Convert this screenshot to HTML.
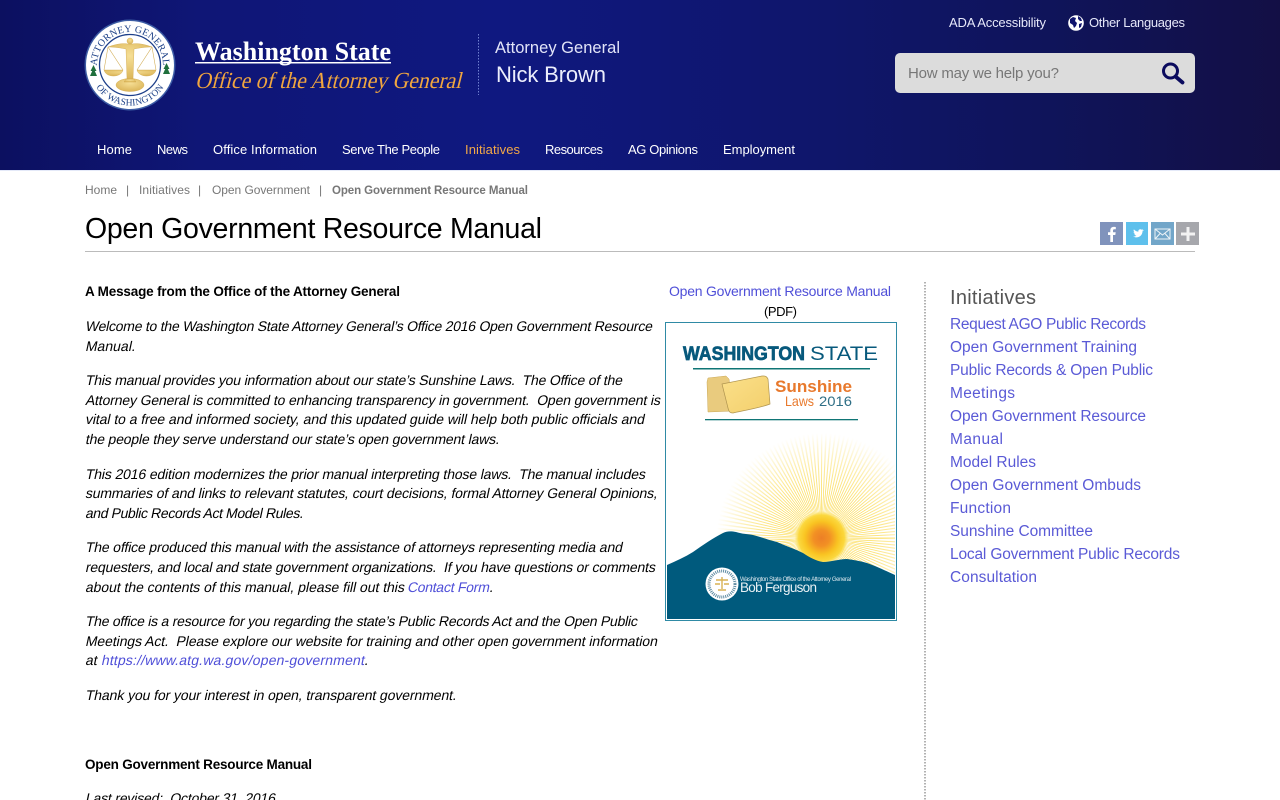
<!DOCTYPE html>
<html lang="en">
<head>
<meta charset="utf-8">
<title>Open Government Resource Manual</title>
<style>
html,body{margin:0;padding:0;width:1280px;height:800px;overflow:hidden;background:#fff}
#hdr{position:absolute;left:0;top:0;width:1280px;height:170px;background:linear-gradient(90deg,#0c1060 0,#0f1676 200px,#0f1880 500px,#0f166c 800px,#0f145a 1050px,#130f45 1280px);border-bottom:1px solid #e4e9f8}
svg#p{position:absolute;left:0;top:0;display:block}
text{font-family:"Liberation Sans",sans-serif;white-space:pre}
.n{font-size:13px;fill:#fff}
.b{font-size:14px;fill:#000}
.h{font-size:13.5px;fill:#000;font-weight:bold}
.c{font-size:12px;fill:#777}
.s{font-size:15.5px;fill:#5a5ad6}
.k{fill:#4f4fd8}
</style>
</head>
<body>
<header id="hdr"></header>
<svg id="p" width="1280" height="800" viewBox="0 0 1280 800" xmlns="http://www.w3.org/2000/svg">
<defs>
<radialGradient id="sun" cx="50%" cy="50%" r="50%">
<stop offset="0" stop-color="#ec7f26"/><stop offset=".3" stop-color="#f29024"/><stop offset=".62" stop-color="#f9c422"/><stop offset=".85" stop-color="#fbd530" stop-opacity=".9"/><stop offset="1" stop-color="#fbdc44" stop-opacity="0"/>
</radialGradient>
<radialGradient id="fade" gradientUnits="userSpaceOnUse" cx="821.500" cy="538" r="105">
<stop offset="0" stop-color="#fff" stop-opacity="0"/><stop offset=".3" stop-color="#fff" stop-opacity=".02"/><stop offset=".6" stop-color="#fff" stop-opacity=".45"/><stop offset="1" stop-color="#fff" stop-opacity="1"/>
</radialGradient>
<radialGradient id="gold" cx="50%" cy="35%" r="70%"><stop offset="0" stop-color="#f6df96"/><stop offset="1" stop-color="#d9b254"/></radialGradient>
<linearGradient id="fold" x1="0" y1="0" x2="1" y2="1"><stop offset="0" stop-color="#fbe08a"/><stop offset="1" stop-color="#f3cf6c"/></linearGradient>
<clipPath id="cov"><rect x="667" y="324" width="228" height="295"/></clipPath>
<path id="arcT" d="M97 65a33 33 0 0 1 66 0"/>
<path id="arcB" d="M89.500 65a40.500 40.500 0 0 0 81 0"/>
</defs>

<!-- seal -->
<circle cx="130" cy="65" r="45.500" fill="#5b8cc8" opacity=".6"/>
<circle cx="130" cy="65" r="44" fill="#fff"/>
<circle cx="130" cy="65" r="30.500" fill="#fff" stroke="#1d3f8a" stroke-width="1.300"/>
<text font-size="10" style="font-family:'Liberation Serif',serif" fill="#1b3f86" letter-spacing=".2"><textPath href="#arcT" startOffset="50%" text-anchor="middle">ATTORNEY GENERAL</textPath></text>
<text font-size="9.500" style="font-family:'Liberation Serif',serif" fill="#1b3f86" letter-spacing=".2"><textPath href="#arcB" startOffset="50%" text-anchor="middle">OF WASHINGTON</textPath></text>
<path d="M90.500 71l3-6 3 6zM90 76l3.500-8 3.500 8zM163.500 69l3-6 3 6zM163 74l3.500-8 3.500 8z" fill="#1f6f3c"/>
<g fill="url(#gold)" stroke="#cfa64a" stroke-width=".4">
<path d="M108 47c8-3 15-4 20-3h4c5-1 12 0 20 3-7 0-13 1-18 2l-1 30h-6l-1-30c-5-1-11-2-18-2z"/>
<circle cx="130" cy="41" r="3"/>
<path d="M104 70h19c-1 4-5 6-9.500 6s-8.500-2-9.500-6zM137 70h19c-1 4-5 6-9.500 6s-8.500-2-9.500-6z"/>
<ellipse cx="130" cy="85" rx="14" ry="6.500"/>
<path d="M126 79h8l2 3h-12z"/>
</g>
<path d="M108 47l-4 23M108 47l15 23M152 47l-15 23M152 47l4 23" stroke="#d2ad55" stroke-width=".6" fill="none"/>

<!-- brand -->
<text x="195" y="60" textLength="196" font-size="26" font-weight="bold" fill="#fff" style="font-family:'Liberation Serif',serif">Washington State</text>
<rect x="195" y="62" width="196" height="1.500" fill="#fff"/>
<text transform="translate(195 88) skewX(-14)" textLength="266" lengthAdjust="spacingAndGlyphs" font-size="23" fill="#f1a63f" style="font-family:'Liberation Serif',serif">Office of the Attorney General</text>
<line x1="478.500" y1="34" x2="478.500" y2="95" stroke="#6f7fd0" stroke-width="1" stroke-dasharray="1.500 1.500"/>
<text x="495" y="53" textLength="125" font-size="16.500" fill="#e2e4f8">Attorney General</text>
<text x="496" y="82" textLength="110" font-size="22" fill="#eceefc">Nick Brown</text>

<!-- top right -->
<text x="949" y="27" textLength="97" font-size="13" fill="#e6e8fa">ADA Accessibility</text>
<circle cx="1076" cy="23" r="7.800" fill="#fff"/>
<path d="M1070 19l3-2 3 1-1 3 2 2-1 3-2 2-1-3-3-2zM1078 16l3 2 1 3-2 0-2-2zM1079 24l3-1-1 4-2 1z" fill="#10156e"/>
<text x="1089" y="27" textLength="96" font-size="13" fill="#e6e8fa">Other Languages</text>
<rect x="895" y="53" width="300" height="40" rx="5" fill="#dcdcdc"/>
<text x="908" y="78" textLength="151" font-size="15" fill="#777">How may we help you?</text>
<circle cx="1170.500" cy="71" r="7" fill="none" stroke="#0b0b5e" stroke-width="3"/>
<line x1="1175.500" y1="76.500" x2="1182.500" y2="82.500" stroke="#0b0b5e" stroke-width="3.800" stroke-linecap="round"/>

<!-- nav -->
<text class="n" x="97" y="154" textLength="35">Home</text>
<text class="n" x="157" y="154" textLength="31">News</text>
<text class="n" x="213" y="154" textLength="104">Office Information</text>
<text class="n" x="342" y="154" textLength="98">Serve The People</text>
<text class="n" x="465" y="154" textLength="55" style="fill:#f3a847">Initiatives</text>
<text class="n" x="545" y="154" textLength="58">Resources</text>
<text class="n" x="628" y="154" textLength="70">AG Opinions</text>
<text class="n" x="723" y="154" textLength="72">Employment</text>

<!-- breadcrumb -->
<text class="c" x="85" y="194" textLength="32">Home</text>
<text class="c" x="126" y="194">|</text>
<text class="c" x="139" y="194" textLength="51">Initiatives</text>
<text class="c" x="198" y="194">|</text>
<text class="c" x="212" y="194" textLength="98">Open Government</text>
<text class="c" x="319" y="194">|</text>
<text class="c" x="332" y="194" textLength="196" font-weight="bold" style="font-size:11.500px">Open Government Resource Manual</text>

<!-- title -->
<text x="85" y="238" textLength="457" font-size="28.500" fill="#000">Open Government Resource Manual</text>
<rect x="85" y="251" width="1110" height="1" fill="#bbb"/>

<!-- share -->
<rect x="1100" y="222" width="23" height="23" fill="#8093bc"/>
<path d="M1113 242v-7h2.300l.4-2.800H1113v-1.700c0-.8.300-1.300 1.400-1.300h1.400V227c-.3 0-1.100-.1-2-.1-2.100 0-3.500 1.300-3.500 3.500v1.800H1108v2.800h2.300v7z" fill="#fff"/>
<rect x="1126" y="222" width="22" height="23" fill="#5ec0ec"/>
<path d="M1144 229.500c-.6.300-1.200.4-1.800.5.600-.4 1.100-1 1.400-1.700-.6.400-1.300.6-2 .8-1.500-1.500-4.400-.6-4.700 1.400-.1.400 0 .8.100 1.200-2.500-.1-4.800-1.300-6.300-3.200-.8 1.400-.4 3.100.9 4-.5 0-.9-.1-1.300-.4 0 1.500 1 2.700 2.400 3-.4.100-.9.100-1.300.1.400 1.200 1.500 2 2.800 2-1.300 1-2.900 1.500-4.500 1.300 5 3 12.500.6 13-7.300.6-.4 1.300-1 1.800-1.700z" fill="#fff" transform="translate(1137 234) scale(.72) translate(-1135 -235)"/>
<rect x="1151" y="222" width="23" height="23" fill="#72a6c9"/>
<path d="M1155 229h15v10h-15zM1155 229l7.500 6 7.500-6M1155 239l5.500-6M1170 239l-5.500-6" fill="none" stroke="#eef4f8" stroke-width="1"/>
<rect x="1176" y="222" width="23" height="23" fill="#a6a7ac"/>
<path d="M1188 227v14M1181 234h14" stroke="#f2f2f2" stroke-width="3"/>

<!-- main copy -->
<text class="h" x="85" y="296" textLength="315">A Message from the Office of the Attorney General</text>
<text class="b" transform="translate(85 331) skewX(-12)" textLength="567">Welcome to the Washington State Attorney General’s Office 2016 Open Government Resource</text>
<text class="b" transform="translate(85 351) skewX(-12)" textLength="50">Manual.</text>
<text class="b" transform="translate(85 385) skewX(-12)" textLength="537">This manual provides you information about our state’s Sunshine Laws.  The Office of the</text>
<text class="b" transform="translate(85 405) skewX(-12)" textLength="575">Attorney General is committed to enhancing transparency in government.  Open government is</text>
<text class="b" transform="translate(85 424) skewX(-12)" textLength="559">vital to a free and informed society, and this updated guide will help both public officials and</text>
<text class="b" transform="translate(85 444) skewX(-12)" textLength="414">the people they serve understand our state’s open government laws.</text>
<text class="b" transform="translate(85 479) skewX(-12)" textLength="560">This 2016 edition modernizes the prior manual interpreting those laws.  The manual includes</text>
<text class="b" transform="translate(85 498) skewX(-12)" textLength="572">summaries of and links to relevant statutes, court decisions, formal Attorney General Opinions,</text>
<text class="b" transform="translate(85 518) skewX(-12)" textLength="218">and Public Records Act Model Rules.</text>
<text class="b" transform="translate(85 552) skewX(-12)" textLength="537">The office produced this manual with the assistance of attorneys representing media and</text>
<text class="b" transform="translate(85 572) skewX(-12)" textLength="570">requesters, and local and state government organizations.  If you have questions or comments</text>
<text class="b" transform="translate(85 592) skewX(-12)" textLength="319">about the contents of this manual, please fill out this</text>
<a href="#"><text class="b k" transform="translate(407 592) skewX(-12)" textLength="82" style="fill:#4f4fd8">Contact Form</text></a>
<text class="b" transform="translate(489 592) skewX(-12)">.</text>
<text class="b" transform="translate(85 626) skewX(-12)" textLength="552">The office is a resource for you regarding the state’s Public Records Act and the Open Public</text>
<text class="b" transform="translate(85 646) skewX(-12)" textLength="572">Meetings Act.  Please explore our website for training and other open government information</text>
<text class="b" transform="translate(85 665) skewX(-12)">at</text>
<a href="#"><text class="b k" transform="translate(101 665) skewX(-12)" textLength="263" style="fill:#4f4fd8">https://www.atg.wa.gov/open-government</text></a>
<text class="b" transform="translate(364 665) skewX(-12)">.</text>
<text class="b" transform="translate(85 700) skewX(-12)" textLength="371">Thank you for your interest in open, transparent government.</text>
<text class="h" x="85" y="769" textLength="227">Open Government Resource Manual</text>
<text class="b" transform="translate(85 803) skewX(-12)" textLength="190">Last revised:  October 31, 2016</text>

<!-- cover -->
<a href="#"><text x="669" y="296" textLength="222" font-size="14" class="k">Open Government Resource Manual</text></a>
<text x="764" y="316" textLength="33" font-size="13" fill="#000">(PDF)</text>
<rect x="665.500" y="322.500" width="231" height="298" fill="#fff" stroke="#2f8aa5" stroke-width="1"/>
<g clip-path="url(#cov)">
<text x="683" y="360" textLength="122" font-size="19" font-weight="bold" fill="#07597c" stroke="#07597c" stroke-width=".7" lengthAdjust="spacingAndGlyphs">WASHINGTON</text>
<text x="810" y="360" textLength="68" font-size="19" fill="#07597c" lengthAdjust="spacingAndGlyphs">STATE</text>
<rect x="693" y="368" width="177" height="1.500" fill="#0f7575"/>
<path d="M707 382l1-4 18-2 3 3 5 32-26 1z" fill="#e9cb7e" stroke="#caa95a" stroke-width=".5"/>
<path d="M722 384l40-8 2 0c2 0 3 1 4 3l2 25c-10 4-29 7-37 9-3 0-4-1-5-5z" fill="url(#fold)" stroke="#b09550" stroke-width=".7"/>
<text x="775" y="392" textLength="77" font-size="17" font-weight="bold" fill="#e8792c" lengthAdjust="spacingAndGlyphs">Sunshine</text>
<text x="785" y="406" textLength="29" font-size="14" fill="#e8792c" lengthAdjust="spacingAndGlyphs">Laws</text>
<text x="819" y="406" textLength="33" font-size="14" fill="#2f6f86" lengthAdjust="spacingAndGlyphs">2016</text>
<rect x="705" y="419" width="153" height="1.300" fill="#0f7575"/>
<text x="708" y="430" textLength="146" font-size="8" fill="#2d6e85">An Open Government Resource Manual</text>
<circle cx="821.500" cy="538" r="62" fill="none" stroke="#fbd535" stroke-width="100" stroke-dasharray="1 1.700"/>
<rect x="667" y="424" width="228" height="170" fill="url(#fade)"/>
<circle cx="821.500" cy="538" r="27" fill="url(#sun)"/>
<path d="M667 565C676 561 685 557 693 552C703 545 713 538 723 533C727 531 731 531 736 532C742 534 748 534 753 535C761 537 769 540 777 542C786 546 795 549 803 553C809 557 816 561 823 562C831 562 839 559 847 559C854 560 860 561 867 563C876 566 886 571 895 575V619H667Z" fill="#005a7d"/>
<circle cx="722" cy="584" r="16.500" fill="#fff"/>
<circle cx="722" cy="584" r="13" fill="none" stroke="#5f8ca3" stroke-width="3" stroke-dasharray="1 1"/>
<circle cx="722" cy="584" r="8" fill="#fff"/>
<path d="M722 577v12M716 580h12M715 584h5M724 584h5M718 590h8" stroke="#d9b254" stroke-width="1.400"/>
<text x="740" y="581" textLength="111" font-size="6" fill="#dce8ee">Washington State Office of the Attorney General</text>
<text x="740" y="592" textLength="77" font-size="13.500" fill="#e8f0f4">Bob Ferguson</text>
</g>

<!-- sidebar -->
<line x1="925" y1="282" x2="925" y2="800" stroke="#999" stroke-width="1.500" stroke-dasharray="1.500 1.500"/>
<text x="950" y="304" textLength="86" font-size="20" fill="#555">Initiatives</text>
<a href="#"><text class="s" x="950" y="329" textLength="196">Request AGO Public Records</text></a>
<a href="#"><text class="s" x="950" y="352" textLength="187">Open Government Training</text></a>
<a href="#"><text class="s" x="950" y="375" textLength="203">Public Records &amp; Open Public</text></a>
<a href="#"><text class="s" x="950" y="398" textLength="65">Meetings</text></a>
<a href="#"><text class="s" x="950" y="421" textLength="196">Open Government Resource</text></a>
<a href="#"><text class="s" x="950" y="444" textLength="53">Manual</text></a>
<a href="#"><text class="s" x="950" y="467" textLength="86">Model Rules</text></a>
<a href="#"><text class="s" x="950" y="490" textLength="191">Open Government Ombuds</text></a>
<a href="#"><text class="s" x="950" y="513" textLength="61">Function</text></a>
<a href="#"><text class="s" x="950" y="536" textLength="143">Sunshine Committee</text></a>
<a href="#"><text class="s" x="950" y="559" textLength="230">Local Government Public Records</text></a>
<a href="#"><text class="s" x="950" y="582" textLength="87">Consultation</text></a>
</svg>
</body>
</html>
